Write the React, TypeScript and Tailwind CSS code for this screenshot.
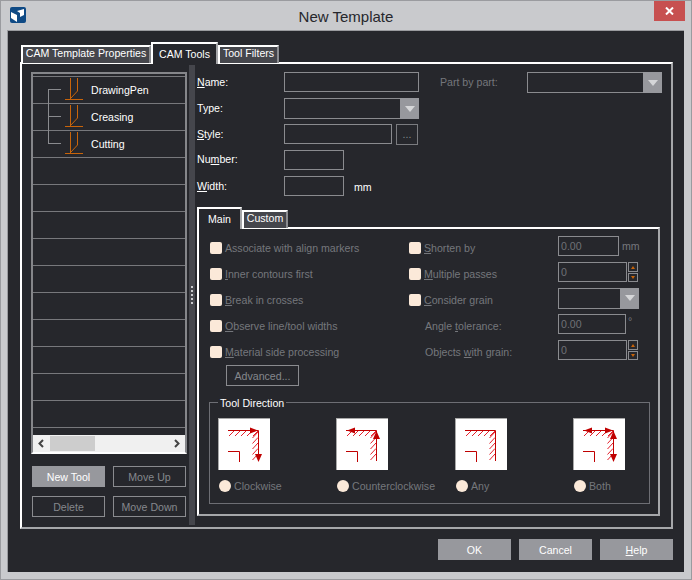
const bar = 'bg-[#97989d]'

function TabHead({ label, active, w }: { label: string; active?: boolean; w: string }) {
  if (active) {
    return (
      <div className={`${w} h-[22px] -mb-[2px] relative z-10 bg-[#26272c] border-2 border-b-0 border-white border-r-[#a6a7aa] text-white flex items-center justify-center whitespace-nowrap`}>
        {label}
      </div>
    )
  }
  return (
    <div className={`${w} h-[18px] self-end bg-[#45464c] border-2 border-b-0 border-white border-r-[#8b8c90] text-white flex items-center justify-center whitespace-nowrap -mb-[1px] pb-[3px]`}>
      {label}
    </div>
  )
}

function Label({ children, className = '' }: { children: React.ReactNode; className?: string }) {
  return <span className={className}>{children}</span>
}

function Box({ w, children }: { w: string; children?: React.ReactNode }) {
  return (
    <div className={`${w} h-[20px] shrink-0 border border-[#8a8b8f] flex items-center px-[2px] text-[#6f7176]`}>
      {children}
    </div>
  )
}

function Combo({ w }: { w: string }) {
  return (
    <div className={`${w} h-[21px] shrink-0 border border-[#8a8b8f] flex justify-end`}>
      <div className={`w-[19px] -my-[1px] -mr-[1px] ${bar} flex items-center justify-center`}>
        <svg width="10" height="6" viewBox="0 0 10 6"><path d="M0 0h10L5 6z" fill="#d5d6d8" /></svg>
      </div>
    </div>
  )
}

function Spin() {
  return (
    <div className="w-[10px] h-[20px] ml-[1px] shrink-0 flex flex-col justify-between">
      <div className="h-[10px] border border-[#8a8b8f] flex items-center justify-center">
        <svg width="4" height="3" viewBox="0 0 4 3"><path d="M2 0l2 3H0z" fill="#c8640a" /></svg>
      </div>
      <div className="h-[9px] border border-[#8a8b8f] flex items-center justify-center">
        <svg width="4" height="3" viewBox="0 0 4 3"><path d="M0 0h4L2 3z" fill="#c8640a" /></svg>
      </div>
    </div>
  )
}

function Check({ children }: { children: React.ReactNode }) {
  return (
    <div className="flex items-center text-[#75777c]">
      <span className="w-[12px] h-[12px] rounded-[2px] bg-[#fbe9d9]" />
      <span className="ml-[3px]">{children}</span>
    </div>
  )
}

function ToolRow({ name, top, bottom }: { name: string; top: boolean; bottom: boolean }) {
  return (
    <div className="h-[27px] border-b border-[#77787c] flex items-center text-white">
      <svg width="52" height="27" viewBox="0 0 52 27" className="shrink-0 overflow-visible">
        {top && <path d="M15.5 -1V12.5" stroke="#8a8b8f" fill="none" />}
        {bottom && <path d="M15.5 12.5V27" stroke="#8a8b8f" fill="none" />}
        <path d="M15 12.5H28" stroke="#8a8b8f" fill="none" />
        <path d="M37.5 1V22M44.5 1V14L38 21" stroke="#c8640a" fill="none" />
        <path d="M32 22.5H50" stroke="#c8640a" fill="none" />
      </svg>
      <span className="ml-[6px]">{name}</span>
    </div>
  )
}

function Hatch({ mode }: { mode: 'cw' | 'ccw' | 'any' | 'both' }) {
  const top = [10, 16, 22, 28, 34]
  const side = [13, 18.5, 24, 29.5, 35]
  return (
    <div className="w-[52px] h-[52px] bg-white border-t border-l border-[#a8a8a8]">
      <svg width="51" height="51" viewBox="0 0 51 51">
        <path d="M9 11.5H39.5V42" stroke="#c00000" fill="none" />
        <path d="M9 32.5H20.5V43" stroke="#c00000" fill="none" />
        {top.map(x => <path key={x} d={`M${x} 17L${x + 5} 12`} stroke="#e4202c" fill="none" />)}
        {side.map(y => <path key={y} d={`M33.5 ${y + 6}L39 ${y}`} stroke="#e4202c" fill="none" />)}
        {(mode === 'cw' || mode === 'both') && <path d="M31 8.5L39 11.5L31 14.5z" fill="#c00000" />}
        {(mode === 'cw' || mode === 'both') && <path d="M36 35H43L39.5 43z" fill="#c00000" />}
        {(mode === 'ccw' || mode === 'both') && <path d="M18 8.5L10 11.5L18 14.5z" fill="#c00000" />}
        {(mode === 'ccw' || mode === 'both') && <path d="M36 20H43L39.5 12z" fill="#c00000" />}
      </svg>
    </div>
  )
}

function Direction({ mode, label, w }: { mode: 'cw' | 'ccw' | 'any' | 'both'; label: string; w: string }) {
  return (
    <div className={w}>
      <Hatch mode={mode} />
      <div className="mt-[10px] ml-[1px] flex items-center text-[#75777c]">
        <span className="w-[12px] h-[12px] rounded-full bg-[#fbe9d9]" />
        <span className="ml-[3px]">{label}</span>
      </div>
    </div>
  )
}

function FormRow({ label, children }: { label: React.ReactNode; children: React.ReactNode }) {
  return (
    <div className="h-[26px] flex items-start">
      <div className="w-[87px] h-[20px] shrink-0 flex items-center text-white">{label}</div>
      {children}
    </div>
  )
}

function OptionRow({ left, right, control }: { left: React.ReactNode; right: React.ReactNode; control: React.ReactNode }) {
  return (
    <div className="h-[26px] flex items-center">
      <div className="w-[199px] shrink-0">{left}</div>
      <div className="w-[149px] shrink-0">{right}</div>
      <div className="flex items-center h-[26px] pb-[4px]">{control}</div>
    </div>
  )
}

function Btn({ children, solid }: { children: React.ReactNode; solid?: boolean }) {
  return (
    <div className={`w-[73px] h-[21px] pt-[1px] flex items-center justify-center ${solid ? `${bar} text-white` : 'border border-[#8a8b8f] text-[#85878c]'}`}>
      {children}
    </div>
  )
}

export default function App() {
  return (
    <div className="w-[692px] h-[580px] bg-[#c9cacd] border border-[#9a9b9f] flex flex-col font-['Liberation_Sans',sans-serif] text-[10.6px] leading-none overflow-hidden">
      <div className="h-[29px] shrink-0 flex items-start">
        <svg width="16" height="16" viewBox="0 0 16 16" className="ml-[9px] mt-[6px] shrink-0">
          <rect width="16" height="16" rx="2" fill="#0f4a85" />
          <path d="M1 5L7 8V15L1 11z" fill="#fff" />
          <path d="M7 4L14 2V8L10 10V6z" fill="#fff" />
        </svg>
        <div className="flex-1 text-center text-[15px] text-[#26272c] mt-[8px] pl-[12px]">New Template</div>
        <div className="w-[31px] h-[20px] mr-[6px] bg-[#c75050] flex items-center justify-center shrink-0">
          <svg width="9" height="8" viewBox="0 0 9 8"><path d="M1 0.5L8 7.5M8 0.5L1 7.5" stroke="#fff" strokeWidth="2" /></svg>
        </div>
      </div>

      <div className="ml-[6px] mr-[7px] h-[542px] bg-[#26272c] border-t border-l border-[#9a9b9f] pl-[12px] pt-[11px]">
        <div className="flex h-[20px] ml-[1px] items-end">
          <TabHead label="CAM Template Properties" w="w-[130px]" />
          <TabHead label="CAM Tools" active w="w-[67px]" />
          <TabHead label="Tool Filters" w="w-[61px]" />
        </div>

        <div className="w-[653px] h-[467px] border-2 border-white border-r-[#a6a7aa] border-b-[#a6a7aa] flex">
          <div className="w-[156px] ml-[9px] mt-[8px] shrink-0">
            <div className="h-[382px] border-2 border-[#85868a] border-b-white flex flex-col">
              <div className="h-[3px] border-b border-[#77787c] shrink-0" />
              <ToolRow name="DrawingPen" top={false} bottom />
              <ToolRow name="Creasing" top bottom />
              <ToolRow name="Cutting" top bottom={false} />
              {Array.from({ length: 10 }).map((_, i) => (
                <div key={i} className="h-[27px] border-b border-[#77787c] shrink-0" />
              ))}
              <div className="flex-1" />
              <div className="h-[17px] bg-[#f0f0f0] flex items-center shrink-0">
                <svg width="17" height="17" viewBox="0 0 17 17" className="shrink-0"><path d="M10 5L6.5 8.5L10 12" stroke="#444" strokeWidth="2" fill="none" /></svg>
                <div className="w-[45px] h-[15px] bg-[#cdcdcd]" />
                <div className="flex-1" />
                <svg width="17" height="17" viewBox="0 0 17 17" className="shrink-0"><path d="M7 5L10.5 8.5L7 12" stroke="#444" strokeWidth="2" fill="none" /></svg>
              </div>
            </div>
            <div className="mt-[12px] ml-[1px] grid grid-cols-[73px_73px] gap-x-[8px] gap-y-[9px]">
              <Btn solid>New Tool</Btn>
              <Btn>Move Up</Btn>
              <Btn>Delete</Btn>
              <Btn>Move Down</Btn>
            </div>
          </div>

          <div className="w-[6px] ml-[2px] mt-[1px] mb-[2px] bg-[#45464c] shrink-0 flex flex-col items-center justify-center gap-[2px]">
            {[0, 1, 2, 3, 4].map(i => <span key={i} className="w-[2px] h-[2px] bg-[#c9cacd]" />)}
          </div>

          <div className="ml-[2px] w-[463px] pt-[8px] shrink-0">
            <FormRow label={<Label><u>N</u>ame:</Label>}>
              <Box w="w-[135px]" />
              <div className="ml-[21px] w-[87px] h-[20px] shrink-0 flex items-center text-[#75777c]">Part by part:</div>
              <Combo w="w-[135px]" />
            </FormRow>
            <FormRow label={<Label>Type:</Label>}>
              <Combo w="w-[135px]" />
            </FormRow>
            <FormRow label={<Label><u>S</u>tyle:</Label>}>
              <Box w="w-[108px]" />
              <div className="ml-[4px] w-[22px] h-[21px] border border-[#7a7b7f] text-[#85878c] flex items-center justify-center">...</div>
            </FormRow>
            <FormRow label={<Label className="-mt-[2px]">Nu<u>m</u>ber:</Label>}>
              <Box w="w-[60px]" />
            </FormRow>
            <FormRow label={<Label><u>W</u>idth:</Label>}>
              <Box w="w-[60px]" />
              <span className="ml-[10px] mt-[6px] text-white">mm</span>
            </FormRow>

            <div className="flex h-[19px] mt-[6px] items-end">
              <TabHead label="Main" active w="w-[45px]" />
              <TabHead label="Custom" w="w-[46px]" />
            </div>

            <div className="w-[463px] h-[289px] border-2 border-white border-r-[#a6a7aa] border-b-[#a6a7aa] pl-[11px] pt-[6px]">
              <OptionRow
                left={<Check>Associate with align markers</Check>}
                right={<Check><u>S</u>horten by</Check>}
                control={<><Box w="w-[61px]">0.00</Box><span className="ml-[3px] text-[#75777c]">mm</span></>}
              />
              <OptionRow
                left={<Check><u>I</u>nner contours first</Check>}
                right={<Check><u>M</u>ultiple passes</Check>}
                control={<><Box w="w-[69px]">0</Box><Spin /></>}
              />
              <OptionRow
                left={<Check><u>B</u>reak in crosses</Check>}
                right={<Check><u>C</u>onsider grain</Check>}
                control={<Combo w="w-[81px]" />}
              />
              <OptionRow
                left={<Check><u>O</u>bserve line/tool widths</Check>}
                right={<span className="ml-[16px] text-[#75777c]">Angle <u>t</u>olerance:</span>}
                control={<><Box w="w-[68px]">0.00</Box><span className="ml-[2px] -mt-[6px] text-[#75777c]">°</span></>}
              />
              <OptionRow
                left={<Check><u>M</u>aterial side processing</Check>}
                right={<span className="ml-[16px] text-[#75777c]">Objects <u>w</u>ith grain:</span>}
                control={<><Box w="w-[69px]">0</Box><Spin /></>}
              />
              <div className="ml-[16px]">
                <div className="w-[73px] h-[21px] pt-[1px] border border-[#8a8b8f] text-[#85878c] flex items-center justify-center">Advanced...</div>
              </div>

              <div className="relative mt-[16px] -ml-[1px] w-[441px] h-[102px] border border-[#6d6e74] pl-[8px] pt-[15px] flex">
                <span className="absolute -top-[5px] left-[8px] px-[2px] bg-[#26272c] text-white">Tool Direction</span>
                <Direction mode="cw" label="Clockwise" w="w-[118px]" />
                <Direction mode="ccw" label="Counterclockwise" w="w-[119px]" />
                <Direction mode="any" label="Any" w="w-[118px]" />
                <Direction mode="both" label="Both" w="w-[52px]" />
              </div>
            </div>
          </div>
        </div>

        <div className="w-[653px] mt-[10px] flex justify-end gap-[8px]">
          <Btn solid>OK</Btn>
          <Btn solid>Cancel</Btn>
          <Btn solid><span><u>H</u>elp</span></Btn>
        </div>
      </div>
    </div>
  )
}
